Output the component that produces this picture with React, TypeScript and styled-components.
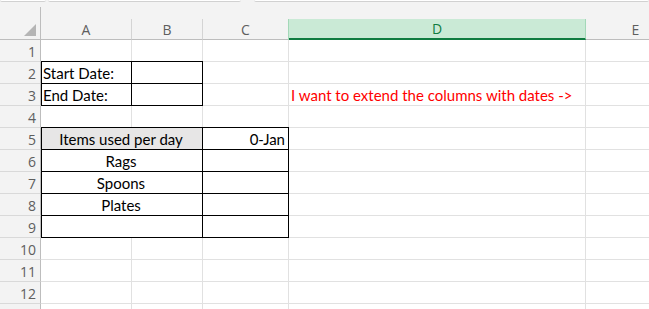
import React from "react";
import styled, {createGlobalStyle, css} from "styled-components";

const GRID = "#e1e1e1";
const HEAD_LINE = "#bdbdbd";
const HEAD_BG = "#f3f3f3";

const GlobalStyle = createGlobalStyle`
	html,
	body {
		margin: 0;
		padding: 0;
		background: #fff;
	}
	#root {
		width: 649px;
		height: 309px;
	}
`;

const Page = styled.div`
	width: 649px;
	height: 309px;
	overflow: hidden;
	background: ${HEAD_BG};
	display: flex;
	flex-direction: column;
`;

const TopBar = styled.div`
	height: 19px;
	flex-shrink: 0;
	display: flex;
	flex-direction: column;
`;

const BarStrip = styled.div`
	height: 2px;
	display: flex;
	background: ${HEAD_BG};
`;

const BarBox = styled.div<{$w?: number; $gap?: number}>`
	${(p) => (p.$w ? `width: ${p.$w}px;` : "flex: 1;")}
	margin-left: ${(p) => p.$gap ?? 0}px;
	box-sizing: border-box;
	background: #fff;
	border-bottom: 1px solid #d1d1d1;
	border-radius: 0 0 4px 4px;
`;

const CornerRise = styled.div`
	width: 41px;
	flex: 1;
	margin-top: 5px;
	box-sizing: border-box;
	border-right: 1px solid ${HEAD_LINE};
`;

const Sheet = styled.div`
	display: grid;
	grid-template-columns: 41px 91px 71px 86px 297px 100px;
	grid-template-rows: 21px;
	grid-auto-rows: 22px;
	background: #fff;
`;

const Corner = styled.div`
	box-sizing: border-box;
	background: ${HEAD_BG};
	border-right: 1px solid ${HEAD_LINE};
	border-bottom: 1px solid ${HEAD_LINE};
	display: flex;
	align-items: flex-end;
	justify-content: flex-end;
	padding: 0 4px 3px 0;
`;

const CornerMark = styled.span`
	width: 12px;
	height: 12px;
	background: #b5b5b5;
	clip-path: polygon(100% 0, 100% 100%, 0 100%);
`;

const headFont = css`
	font-family: "Open Sans", "Liberation Sans", sans-serif;
	font-size: 14px;
	color: #5e5e5e;
`;

const ColHead = styled.div<{$active?: boolean}>`
	box-sizing: border-box;
	display: flex;
	align-items: center;
	justify-content: center;
	background: ${HEAD_BG};
	border-right: 1px solid #d4d4d4;
	border-bottom: 1px solid ${HEAD_LINE};
	${headFont}
	${(p) =>
		p.$active &&
		css`
			background: #caead6;
			color: #107c41;
			border-right-color: #a3d8b8;
			border-bottom: 2px solid #107c41;
			box-shadow: -1px 0 0 #a3d8b8;
		`}
`;

const RowHead = styled.div`
	box-sizing: border-box;
	display: flex;
	align-items: center;
	justify-content: flex-end;
	padding: 1px 4px 0 0;
	background: ${HEAD_BG};
	border-right: 1px solid ${HEAD_LINE};
	border-bottom: 1px solid #d9d9d9;
	${headFont}
`;

type Align = "left" | "center" | "right";

interface CellProps {
	$span?: number;
	$align?: Align;
	$shade?: boolean;
	$red?: boolean;
	$bt?: boolean;
	$bl?: boolean;
	$br?: boolean;
	$bb?: boolean;
}

const justify = {left: "flex-start", center: "center", right: "flex-end"};

const Cell = styled.div<CellProps>`
	box-sizing: border-box;
	grid-column: span ${(p) => p.$span ?? 1};
	display: flex;
	align-items: flex-end;
	justify-content: ${(p) => justify[p.$align ?? "left"]};
	padding: 0 3px 1px 2px;
	background: ${(p) => (p.$shade ? "#e7e6e6" : "#fff")};
	border-right: 1px solid ${(p) => (p.$br ? "#000" : GRID)};
	border-bottom: 1px solid ${(p) => (p.$bb ? "#000" : GRID)};
	box-shadow: ${(p) =>
		[p.$bt && "0 -1px 0 #000", p.$bl && "inset 1px 0 0 #000"]
			.filter(Boolean)
			.join(", ") || "none"};
	font-family: Lato, "Liberation Sans", sans-serif;
	font-size: 15px;
	line-height: 17px;
	color: ${(p) => (p.$red ? "#ff0000" : "#000")};
	white-space: nowrap;
`;

interface CellDef extends CellProps {
	text?: string;
}

const columns = ["A", "B", "C", "D", "E"];
const box = {$bl: true, $br: true, $bb: true};

// every row lists its cells from A to E, merged cells take a span
const rows: CellDef[][] = [
	[],
	[{text: "Start Date:", ...box, $bt: true}, {$bt: true, $br: true, $bb: true}],
	[{text: "End Date:", ...box}, {$br: true, $bb: true}, {}, {text: "I want to extend the columns with dates ->", $red: true}],
	[],
	[
		{text: "Items used per day", $span: 2, $align: "center", $shade: true, ...box, $bt: true},
		{text: "0-Jan", $align: "right", $bt: true, $br: true, $bb: true},
	],
	[{text: "Rags", $span: 2, $align: "center", ...box}, {$br: true, $bb: true}],
	[{text: "Spoons", $span: 2, $align: "center", ...box}, {$br: true, $bb: true}],
	[{text: "Plates", $span: 2, $align: "center", ...box}, {$br: true, $bb: true}],
	[{$span: 2, ...box}, {$br: true, $bb: true}],
	[],
	[],
	[],
	[],
];

const fill = (cells: CellDef[]) => {
	const used = cells.reduce((n, c) => n + (c.$span ?? 1), 0);
	return [...cells, ...Array.from({length: columns.length - used}, () => ({}))];
};

const App = () => (
	<>
		<GlobalStyle />
		<Page>
			<TopBar>
				<BarStrip>
					<BarBox $w={46} />
					<BarBox $w={193} $gap={2} />
					<BarBox $gap={13} />
				</BarStrip>
				<CornerRise />
			</TopBar>
			<Sheet>
				<Corner>
					<CornerMark />
				</Corner>
				{columns.map((c) => (
					<ColHead key={c} $active={c === "D"}>
						{c}
					</ColHead>
				))}
				{rows.map((cells, i) => (
					<React.Fragment key={i}>
						{/* row 13 only peeks in at the bottom edge, its number is below the fold */}
						<RowHead>{i < 12 ? i + 1 : ""}</RowHead>
						{fill(cells).map(({text, ...rest}, j) => (
							<Cell key={j} {...rest}>
								{text}
							</Cell>
						))}
					</React.Fragment>
				))}
			</Sheet>
		</Page>
	</>
);

export default App;
